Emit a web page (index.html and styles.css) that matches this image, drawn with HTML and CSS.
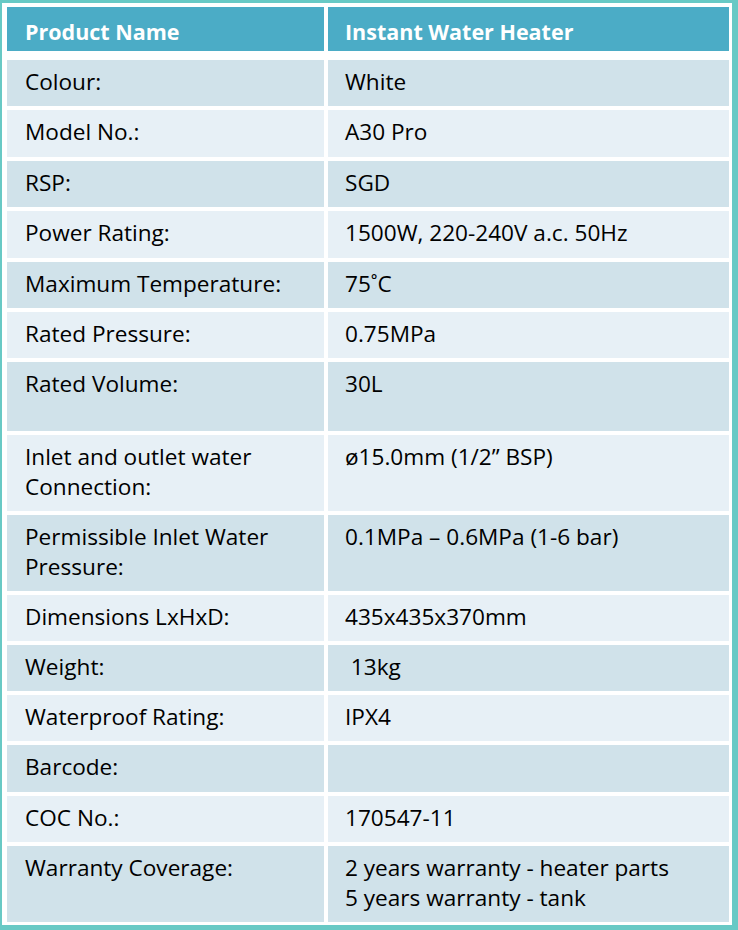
FILE: index.html
```html
<!DOCTYPE html>
<html>
<head>
<meta charset="utf-8">
<link rel="stylesheet" href="styles.css">
</head>
<body>
<div class="frame">
  <div class="spec">
    <div class="row head"><div class="cell">Product Name</div><div class="cell">Instant Water Heater</div></div>
    <div class="row dark"><div class="cell">Colour:</div><div class="cell">White</div></div>
    <div class="row light plus"><div class="cell">Model No.:</div><div class="cell">A30 Pro</div></div>
    <div class="row dark"><div class="cell">RSP:</div><div class="cell">SGD</div></div>
    <div class="row light plus"><div class="cell">Power Rating:</div><div class="cell">1500W, 220-240V a.c. 50Hz</div></div>
    <div class="row dark"><div class="cell">Maximum Temperature:</div><div class="cell">75˚C</div></div>
    <div class="row light"><div class="cell">Rated Pressure:</div><div class="cell">0.75MPa</div></div>
    <div class="row dark tall"><div class="cell">Rated Volume:</div><div class="cell">30L</div></div>
    <div class="row light"><div class="cell">Inlet and outlet water<br>Connection:</div><div class="cell">ø15.0mm (1/2” BSP)</div></div>
    <div class="row dark"><div class="cell">Permissible Inlet Water<br>Pressure:</div><div class="cell">0.1MPa – 0.6MPa (1-6 bar)</div></div>
    <div class="row light"><div class="cell">Dimensions LxHxD:</div><div class="cell">435x435x370mm</div></div>
    <div class="row dark"><div class="cell">Weight:</div><div class="cell">&nbsp;13kg</div></div>
    <div class="row light"><div class="cell">Waterproof Rating:</div><div class="cell">IPX4</div></div>
    <div class="row dark plus"><div class="cell">Barcode:</div><div class="cell"></div></div>
    <div class="row light"><div class="cell">COC No.:</div><div class="cell">170547-11</div></div>
    <div class="row dark"><div class="cell">Warranty Coverage:</div><div class="cell">2 years warranty - heater parts<br>5 years warranty - tank</div></div>
  </div>
</div>
</body>
</html>
```

FILE: styles.css
```css
html, body {
  margin: 0;
  padding: 0;
}
body {
  background: #68c9c5;
  width: 738px;
  height: 930px;
  overflow: hidden;
  font-family: "Open Sans", "Noto Sans", sans-serif;
  font-size: 22.6px;
  color: #000;
}
.frame {
  margin: 3px 0 0 2px;
  width: 730px;
  height: 922px;
  background: #fff;
  box-sizing: border-box;
  padding: 4px 3px 4px 5px;
}
.spec {
  display: flex;
  flex-direction: column;
  gap: 4px;
}
.row {
  display: grid;
  grid-template-columns: 317px 401px;
  column-gap: 4px;
}
.cell {
  padding: 7px 10px 9px 18px;
  line-height: 30px;
  white-space: nowrap;
}
.row .cell:last-child {
  padding-left: 17px;
}
.head {
  margin-bottom: 5px;
}
.head .cell {
  background: #4bacc6;
  color: #fff;
  font-weight: 700;
  font-size: 21.5px;
  padding-top: 10px;
  padding-bottom: 4px;
}
.dark .cell {
  background: #d0e2ea;
}
.light .cell {
  background: #e7f0f6;
}
.plus .cell {
  padding-bottom: 10px;
}
.tall .cell {
  padding-bottom: 32px;
}
```
